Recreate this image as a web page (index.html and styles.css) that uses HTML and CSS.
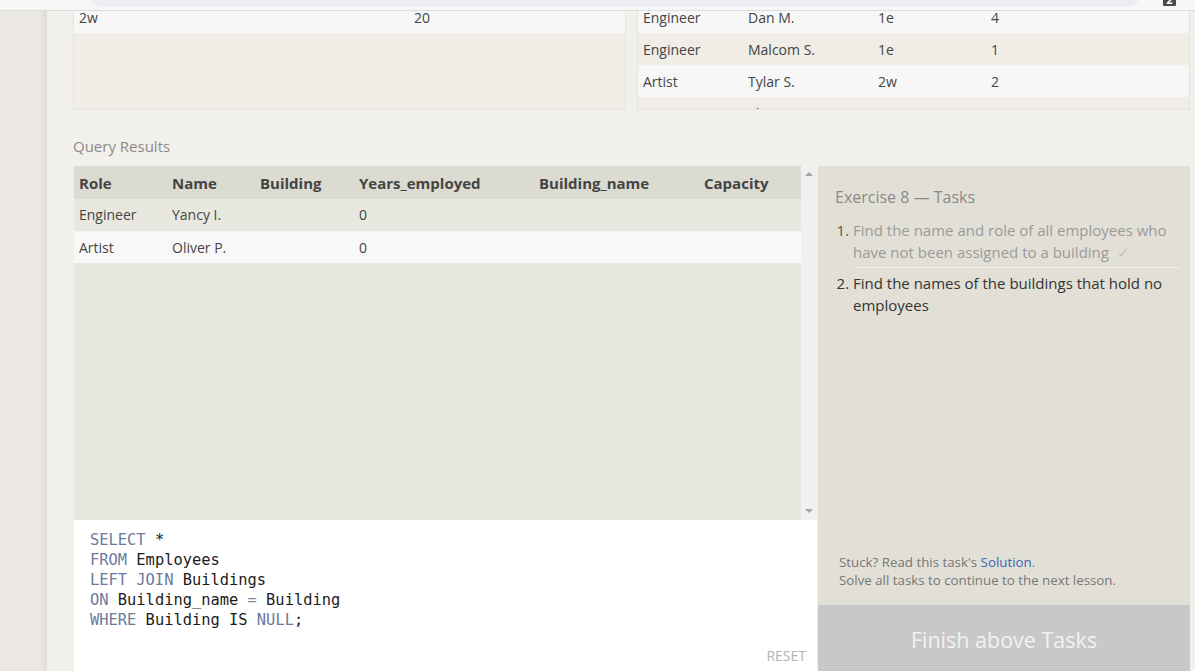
FILE: index.html
```html
<!DOCTYPE html>
<html>
<head>
<meta charset="utf-8">
<link rel="stylesheet" href="styles.css">
</head>
<body>
<div class="topbar">
  <div class="search"></div>
  <div class="badge">2</div>
</div>
<div class="page">
  <div class="datasets">
    <div class="dataset">
      <table class="data left">
        <tr class="odd"><td class="c1">2w</td><td>20</td></tr>
      </table>
    </div>
    <div class="dataset">
      <table class="data right">
        <tr class="odd"><td class="r1">Engineer</td><td class="r2">Dan M.</td><td class="r3">1e</td><td>4</td></tr>
        <tr class="even"><td>Engineer</td><td>Malcom S.</td><td>1e</td><td>1</td></tr>
        <tr class="odd"><td>Artist</td><td>Tylar S.</td><td>2w</td><td>2</td></tr>
        <tr class="even"><td>Artist</td><td>Sherman D.</td><td>2w</td><td>8</td></tr>
      </table>
    </div>
  </div>

  <div class="label">Query Results</div>

  <div class="workspace">
    <div class="leftcol">
      <div class="results">
        <div class="results-data">
          <table class="res">
            <thead>
              <tr><th class="w1">Role</th><th class="w2">Name</th><th class="w3">Building</th><th class="w4">Years_employed</th><th class="w5">Building_name</th><th class="w6">Capacity</th></tr>
            </thead>
            <tbody>
              <tr class="r-a"><td>Engineer</td><td>Yancy I.</td><td></td><td>0</td><td></td><td></td></tr>
              <tr class="r-b"><td>Artist</td><td>Oliver P.</td><td></td><td>0</td><td></td><td></td></tr>
            </tbody>
          </table>
        </div>
        <div class="scrollbar">
          <span class="arrow up"></span>
          <span class="arrow down"></span>
        </div>
      </div>
      <div class="editor">
<pre class="code"><span class="kw">SELECT</span> *
<span class="kw">FROM</span> Employees
<span class="kw">LEFT JOIN</span> Buildings
<span class="kw">ON</span> Building_name <span class="op">=</span> Building
<span class="kw">WHERE</span> Building <span class="kw2">IS</span> <span class="kw">NULL</span>;</pre>
        <div class="reset-row"><span class="reset">RESET</span></div>
      </div>
    </div>

    <div class="rightcol">
      <div class="tasks">
        <div class="tasks-title">Exercise 8 — Tasks</div>
        <ol class="task-list">
          <li class="done">Find the name and role of all employees who have not been assigned to a building <span class="check">✓</span></li>
          <li class="todo">Find the names of the buildings that hold no employees</li>
        </ol>
        <div class="stuck">
          Stuck? Read this task's <a class="sol">Solution</a>.<br>
          Solve all tasks to continue to the next lesson.
        </div>
      </div>
      <div class="finish">Finish above Tasks</div>
    </div>
  </div>
</div>
</body>
</html>
```

FILE: styles.css
```css
html, body {
  margin: 0;
  padding: 0;
  height: 671px;
  overflow: hidden;
}
body {
  background: #ebe8e4;
  font-family: "Open Sans", "Noto Sans", sans-serif;
  color: #444;
}
.topbar {
  position: fixed;
  top: 0;
  left: 0;
  right: 0;
  height: 10px;
  background: #f7f7f7;
  border-bottom: 1px solid #dcdcdc;
  overflow: hidden;
  z-index: 5;
}
.search {
  position: absolute;
  left: 90px;
  top: -18px;
  width: 1050px;
  height: 25px;
  background: #eceef1;
  border-radius: 13px;
}
.badge {
  position: absolute;
  left: 1163px;
  top: -7px;
  width: 13px;
  height: 13px;
  background: #4a4a4a;
  color: #fff;
  font-size: 11px;
  line-height: 13px;
  text-align: center;
  font-weight: bold;
  border-radius: 1px;
}
.page {
  margin-left: 47px;
  height: 671px;
  background: #f2f0ea;
  box-shadow: -6px 0 7px -3px rgba(0,0,0,0.07);
  padding-left: 26px;
  box-sizing: border-box;
}
.datasets {
  display: flex;
  gap: 11px;
  width: 1117px;
}
.dataset {
  width: 553px;
  height: 110px;
  box-sizing: border-box;
  border: 1px solid #e6e4dd;
  border-top: none;
  background: #efede6;
  overflow: hidden;
  padding-top: 1px;
}
table {
  border-collapse: collapse;
  border-spacing: 0;
}
.data {
  width: 100%;
  table-layout: fixed;
  font-size: 14px;
  color: #444;
}
.data td {
  height: 32px;
  padding: 0 0 0 5px;
  box-sizing: border-box;
  vertical-align: middle;
  white-space: nowrap;
}
.data tr.odd { background: #f7f7f7; }
.data tr.even { background: #efede5; }
.data.left .c1 { width: 335px; }
.data.right .r1 { width: 105px; }
.data.right .r2 { width: 130px; }
.data.right .r3 { width: 113px; }

.label {
  margin-top: 26px;
  height: 20px;
  line-height: 20px;
  font-size: 15px;
  color: #8a8a8a;
  margin-bottom: 10px;
}
.workspace {
  display: flex;
  align-items: flex-start;
  gap: 1px;
}
.leftcol {
  margin-left: 1px;
  width: 743px;
  display: flex;
  flex-direction: column;
}
.results {
  height: 354px;
  display: flex;
  background: #f2f0ea;
}
.results-data {
  width: 727px;
  background: #e9e8e0;
}
.res {
  width: 100%;
  table-layout: fixed;
  font-size: 14px;
}
.res th {
  height: 33px;
  background: #dcdbd1;
  text-align: left;
  font-weight: bold;
  color: #444;
  padding: 0 0 0 5px;
  font-size: 15px;
}
.res td {
  height: 32px;
  padding: 0 0 0 5px;
  color: #444;
  box-sizing: border-box;
}
.res .w1 { width: 88px; }
.res .w2 { width: 83px; }
.res .w3 { width: 94px; }
.res .w4 { width: 175px; }
.res .w5 { width: 160px; }
.res tr.r-a { background: #e9e8e0; border-bottom: 1px solid #f3f2ee; }
.res tr.r-b { background: #f8f8f8; }
.scrollbar {
  width: 15px;
  background: #f0f0f0;
  display: flex;
  flex-direction: column;
  justify-content: space-between;
  align-items: center;
  padding: 6px 0 7px;
  box-sizing: border-box;
}
.arrow {
  width: 0;
  height: 0;
  border-left: 4px solid transparent;
  border-right: 4px solid transparent;
}
.arrow.up { border-bottom: 4px solid #a3a3a3; }
.arrow.down { border-top: 4px solid #a3a3a3; }
.editor {
  height: 136px;
  background: #fff;
  padding: 10px 11px 5px 16px;
  display: flex;
  flex-direction: column;
}
.code {
  margin: 0;
  font-family: "DejaVu Sans Mono", "Liberation Mono", monospace;
  font-size: 15.4px;
  line-height: 20px;
  color: #1c1c1c;
}
.kw { color: #6b7a9d; }
.kw2 { color: #1c1c1c; }
.op { color: #7c88a8; }
.reset-row {
  margin-top: auto;
  display: flex;
  justify-content: flex-end;
}
.reset {
  font-size: 14px;
  line-height: 20px;
  color: #b3b3b3;
}
.rightcol {
  width: 372px;
  display: flex;
  flex-direction: column;
}
.tasks {
  height: 439px;
  background: #e2e0d6;
  box-sizing: border-box;
  padding: 20px 10px 16px 17px;
  display: flex;
  flex-direction: column;
}
.tasks-title {
  font-size: 16px;
  line-height: 22px;
  color: #8a8a8a;
}
.task-list {
  margin: 8px 0 0 0;
  padding: 0 0 0 18px;
  font-size: 15px;
  line-height: 22px;
}
.task-list li {
  padding: 3px 0 4px 0;
}
.task-list li.done {
  color: #9a9a9a;
  border-bottom: 1px solid #efede7;
}
.task-list li.done::marker { color: #555; }
.task-list li.todo { color: #333; padding-top: 4px; }
.check {
  color: #c0c0c0;
  margin-left: 4px;
  font-size: 15px;
  line-height: 20px;
}
.stuck {
  margin-top: auto;
  margin-left: 4px;
  font-size: 13.3px;
  line-height: 18px;
  color: #777;
}
.sol { color: #3c66b5; }
.finish {
  height: 70px;
  background: #c8c8c8;
  color: #f2f2f2;
  font-size: 21.5px;
  line-height: 70px;
  text-align: center;
}
```
